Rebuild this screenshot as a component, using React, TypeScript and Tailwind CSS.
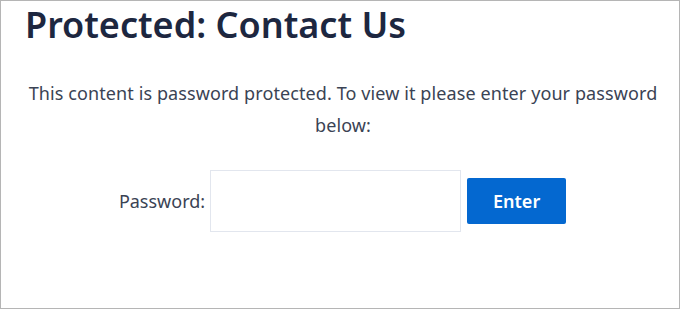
export default function App() {
  return (
    <div className="h-[309px] w-[680px] overflow-hidden border border-[#b5b5b5] bg-white font-['Noto_Sans',sans-serif]">
      <h1 className="ml-[24px] mt-[2px] text-[36px] font-semibold leading-[44px] text-[#1d2740]">
        Protected: Contact Us
      </h1>
      <p className="mx-auto mt-[30px] w-[660px] pl-[6px] text-center text-[18px] leading-[32px] tracking-[0.1px] text-[#3a4354]">
        This content is password protected. To view it please enter your password below:
      </p>
      <form className="mt-[29px] flex items-center justify-center gap-[5px] pl-[5px]">
        <label className="text-[18px] text-[#3a4354]">Password:</label>
        <input
          type="password"
          className="h-[62px] w-[251px] border border-[#e2e6ee] bg-white outline-none"
        />
        <button
          type="button"
          className="ml-[1px] h-[46px] w-[99px] rounded-[2px] bg-[#0468d0] text-[18px] font-semibold text-white"
        >
          Enter
        </button>
      </form>
    </div>
  );
}
